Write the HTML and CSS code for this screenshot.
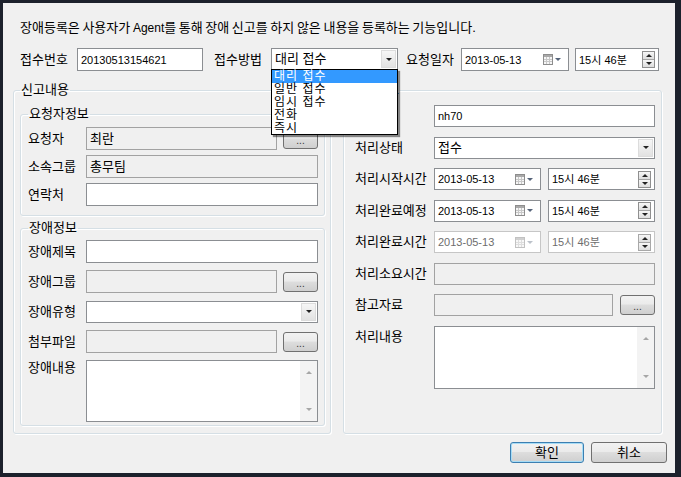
FILE: index.html
```html
<!DOCTYPE html>
<html lang="ko">
<head>
    <meta charset="UTF-8">
    <title>장애등록</title>
    <link rel="stylesheet" href="styles.css">
</head>
<body>

<div class="dialog">
    <p class="desc">장애등록은 사용자가 <span class="en">Agent</span>를 통해 장애 신고를 하지 않은 내용을 등록하는 기능입니다.</p>

    <div class="top-row">
        <span class="lbl lbl-top">접수번호</span>
        <div class="field w-no">20130513154621</div>
        <span class="lbl lbl-top gap-l">접수방법</span>
        <div class="field combo w-method"><span class="val ko">대리 접수</span><span class="combo-btn"><i class="tri"></i></span></div>
        <span class="lbl lbl-date">요청일자</span>
        <div class="field date w-date">
            <span class="val">2013-05-13</span>
            <span class="cal-btn">
                <svg width="10" height="11" viewBox="0 0 10 11"><rect x="0.5" y="0.5" width="9" height="10" fill="#f6f6f6" stroke="#8d8d8d"/><rect x="1" y="1" width="8" height="2" fill="#a9a9a9"/><path d="M1 5.5h8M1 7.5h8M3.5 3v7M6.5 3v7" stroke="#c8c8c8"/></svg>
                <i class="tri tri-blue"></i>
            </span>
        </div>
        <div class="field time w-time">
            <span class="val">15시 46분</span>
            <span class="spin"><span class="spin-btn"><i class="tri-up"></i></span><span class="spin-btn"><i class="tri"></i></span></span>
        </div>
    </div>

    <div class="main">
        <fieldset class="group group-left">
            <legend>신고내용</legend>

            <fieldset class="group sub sub-user">
                <legend>요청자정보</legend>
                <div class="row"><span class="lbl">요청자</span><div class="field off grow"><span class="ko">최란</span></div><button class="dots">...</button></div>
                <div class="row"><span class="lbl">소속그룹</span><div class="field off grow"><span class="ko">총무팀</span></div></div>
                <div class="row"><span class="lbl">연락처</span><div class="field grow"></div></div>
            </fieldset>

            <fieldset class="group sub sub-fault">
                <legend>장애정보</legend>
                <div class="row"><span class="lbl">장애제목</span><div class="field grow"></div></div>
                <div class="row"><span class="lbl">장애그룹</span><div class="field off grow"></div><button class="dots">...</button></div>
                <div class="row"><span class="lbl">장애유형</span><div class="field combo grow"><span class="val"></span><span class="combo-btn"><i class="tri"></i></span></div></div>
                <div class="row"><span class="lbl">첨부파일</span><div class="field off grow"></div><button class="dots">...</button></div>
                <div class="row row-area">
                    <span class="lbl">장애내용</span>
                    <div class="field memo grow"><span class="sb"><i class="tri-up gray"></i><i class="tri gray"></i></span></div>
                </div>
            </fieldset>
        </fieldset>

        <fieldset class="group group-right">
            <legend>처리정보</legend>
            <div class="rrow"><span class="lbl">처리자</span><div class="field grow">nh70</div></div>
            <div class="rrow"><span class="lbl">처리상태</span><div class="field combo grow"><span class="val ko">접수</span><span class="combo-btn"><i class="tri"></i></span></div></div>
            <div class="rrow">
                <span class="lbl">처리시작시간</span>
                <div class="field date grow">
                    <span class="val">2013-05-13</span>
                    <span class="cal-btn">
                        <svg width="10" height="11" viewBox="0 0 10 11"><rect x="0.5" y="0.5" width="9" height="10" fill="#f6f6f6" stroke="#8d8d8d"/><rect x="1" y="1" width="8" height="2" fill="#a9a9a9"/><path d="M1 5.5h8M1 7.5h8M3.5 3v7M6.5 3v7" stroke="#c8c8c8"/></svg>
                        <i class="tri tri-blue"></i>
                    </span>
                </div>
                <div class="field time grow">
                    <span class="val">15시 46분</span>
                    <span class="spin"><span class="spin-btn"><i class="tri-up"></i></span><span class="spin-btn"><i class="tri"></i></span></span>
                </div>
            </div>
            <div class="rrow">
                <span class="lbl">처리완료예정</span>
                <div class="field date grow">
                    <span class="val">2013-05-13</span>
                    <span class="cal-btn">
                        <svg width="10" height="11" viewBox="0 0 10 11"><rect x="0.5" y="0.5" width="9" height="10" fill="#f6f6f6" stroke="#8d8d8d"/><rect x="1" y="1" width="8" height="2" fill="#a9a9a9"/><path d="M1 5.5h8M1 7.5h8M3.5 3v7M6.5 3v7" stroke="#c8c8c8"/></svg>
                        <i class="tri tri-blue"></i>
                    </span>
                </div>
                <div class="field time grow">
                    <span class="val">15시 46분</span>
                    <span class="spin"><span class="spin-btn"><i class="tri-up"></i></span><span class="spin-btn"><i class="tri"></i></span></span>
                </div>
            </div>
            <div class="rrow">
                <span class="lbl">처리완료시간</span>
                <div class="field date disabled grow">
                    <span class="val">2013-05-13</span>
                    <span class="cal-btn">
                        <svg width="10" height="11" viewBox="0 0 10 11"><rect x="0.5" y="0.5" width="9" height="10" fill="#f8f8f8" stroke="#c2c2c2"/><rect x="1" y="1" width="8" height="2" fill="#d0d0d0"/><path d="M1 5.5h8M1 7.5h8M3.5 3v7M6.5 3v7" stroke="#dedede"/></svg>
                        <i class="tri tri-light"></i>
                    </span>
                </div>
                <div class="field time disabled grow">
                    <span class="val">15시 46분</span>
                    <span class="spin"><span class="spin-btn"><i class="tri-up"></i></span><span class="spin-btn"><i class="tri"></i></span></span>
                </div>
            </div>
            <div class="rrow"><span class="lbl">처리소요시간</span><div class="field off grow"></div></div>
            <div class="rrow"><span class="lbl">참고자료</span><div class="field off grow"></div><button class="dots">...</button></div>
            <div class="rrow row-area">
                <span class="lbl">처리내용</span>
                <div class="field memo memo-r grow"><span class="sb"><i class="tri-up gray"></i><i class="tri gray"></i></span></div>
            </div>
        </fieldset>
    </div>

    <div class="footer">
        <button class="btn btn-ok">확인</button>
        <button class="btn btn-cancel">취소</button>
    </div>

    <!-- 접수방법 콤보 펼침 목록 -->
    <ul class="dropdown">
        <li class="sel">대리 접수</li>
        <li>일반 접수</li>
        <li>임시 접수</li>
        <li>전화</li>
        <li>즉시</li>
    </ul>
</div>

</body>
</html>
```

FILE: styles.css
```css
* {
    box-sizing: border-box;
}
body {
    margin: 0;
    background-color: #1c212c;
    font-family: "Liberation Sans", "Noto Sans CJK KR", sans-serif;
    font-size: 13px;
    color: #000;
}
.dialog {
    position: relative;
    margin: 3px 0 0 3px;
    width: 672px;
    height: 470px;
    background-color: #f0f0f0;
    padding: 17px 8px 0 10px;
    display: flex;
    flex-direction: column;
}
.desc {
    margin: 0 0 0 7px;
    line-height: 16px;
    height: 16px;
    word-spacing: -1px;
}
.en {
    font-size: 12px;
}

/* 상단 줄 */
.top-row {
    margin: 12px 0 0 7px;
    height: 23px;
    display: flex;
    align-items: center;
}
.lbl {
    line-height: 14px;
    white-space: nowrap;
    flex-shrink: 0;
}
.lbl-top {
    width: 57px;
}
.lbl-date {
    width: 55px;
    margin-left: 8px;
}
.gap-l {
    margin-left: 11px;
}
.w-no { width: 126px; }
.w-method { width: 127px; height: 22px; align-self: flex-start; }
.w-date { width: 108px; height: 24px; }
.w-time { width: 84px; height: 24px; margin-left: 6px; }

/* 입력 컨트롤 */
.field {
    height: 23px;
    border: 1px solid #8b8e92;
    background-color: #fff;
    padding: 0 0 0 3px;
    display: flex;
    align-items: center;
    line-height: 14px;
    font-size: 11px;
    white-space: nowrap;
    min-width: 0;
}
.field .ko {
    font-size: 13px;
}
.field.off {
    background-color: #f0f0f0;
    border-color: #a2a2a2;
}
.field.disabled {
    border-color: #c6c6c6;
    color: #6d6d6d;
}
.grow {
    flex: 1;
}
.val {
    flex: 1;
    overflow: hidden;
}
.combo {
    height: 22px;
}
.combo-btn {
    width: 15px;
    height: 18px;
    margin-right: 1px;
    background: linear-gradient(#f6f6f6, #e2e2e2);
    border: 1px solid #dcdcdc;
    display: flex;
    align-items: center;
    justify-content: center;
}
.tri {
    display: block;
    width: 0;
    height: 0;
    border-left: 3px solid transparent;
    border-right: 3px solid transparent;
    border-top: 3px solid #222;
}
.tri-up {
    display: block;
    width: 0;
    height: 0;
    border-left: 3px solid transparent;
    border-right: 3px solid transparent;
    border-bottom: 3px solid #222;
}
.tri-blue {
    border-top-color: #56647a;
    margin-left: 2px;
}
.tri-light {
    border-top-color: #bcc2ca;
    margin-left: 2px;
}
.gray {
    border-top-color: #a6a6a6;
    border-bottom-color: #a6a6a6;
}
.cal-btn {
    display: flex;
    align-items: center;
    margin-right: 7px;
}
.cal-btn svg {
    display: block;
}
.spin {
    width: 13px;
    height: 17px;
    margin-right: 3px;
    display: flex;
    flex-direction: column;
    border: 1px solid #8f8f8f;
    background-color: #fff;
}
.spin-btn {
    flex: 1;
    display: flex;
    align-items: center;
    justify-content: center;
    background: linear-gradient(#f7f7f7, #dedede);
}
.spin-btn + .spin-btn {
    border-top: 1px solid #a5a5a5;
}
.disabled .spin {
    border-color: #a8a8a8;
}
.dots {
    width: 35px;
    height: 20px;
    margin-left: 6px;
    flex-shrink: 0;
    border: 1px solid #707070;
    border-radius: 3px;
    background: linear-gradient(#f2f2f2, #ebebeb 45%, #dddddd 50%, #cfcfcf);
    font-family: "Liberation Sans", sans-serif;
    font-size: 10px;
    color: #333;
    padding: 4px 0 0 0;
    line-height: 10px;
}

/* 그룹 박스 */
.main {
    margin-top: 12px;
    display: flex;
    gap: 12px;
}
.group {
    margin: 0;
    min-width: 0;
    border: 1px solid #d5dfe5;
    border-radius: 3px;
    box-shadow: inset 1px 1px 0 #fff, 1px 1px 0 #fff;
}
.group legend {
    padding: 0 1px;
    line-height: 14px;
}
.group-left {
    width: 318px;
    height: 351px;
    padding: 10px 5px 0 6px;
}
.group-right {
    width: 319px;
    height: 351px;
    padding: 8px 6px 0 11px;
}
.group-right legend {
    margin-left: -5px;
}
.sub {
    padding: 6px 6px 9px 7px;
}
.sub-fault {
    margin-top: 5px;
    padding-top: 5px;
    padding-bottom: 3px;
}
.row {
    display: flex;
    align-items: center;
    height: 23px;
}
.row .lbl {
    width: 58px;
}
.sub-user .row + .row {
    margin-top: 5px;
}
.sub-fault .row + .row {
    margin-top: 7px;
}
.rrow {
    display: flex;
    align-items: center;
    height: 22px;
    gap: 7px;
}
.rrow + .rrow {
    margin-top: 9.5px;
}
.rrow .lbl {
    width: 72px;
}
.rrow .field {
    height: 22px;
}
.rrow .dots {
    margin-left: 0;
}
.row-area {
    align-items: flex-start;
    height: auto;
}
.row-area .lbl {
    margin-top: 1px;
}
.rrow.row-area .lbl {
    margin-top: 4px;
}
.field.memo {
    height: 62px;
    align-items: stretch;
    padding: 0;
}
.field.memo-r {
    height: 63px;
}
.sb {
    margin-left: auto;
    width: 17px;
    background-color: #f3f3f3;
    display: flex;
    flex-direction: column;
    justify-content: space-between;
    align-items: center;
    padding: 10px 0;
}

/* 하단 버튼 */
.footer {
    margin-top: 8px;
    display: flex;
    justify-content: flex-end;
    gap: 7px;
}
.btn {
    height: 21px;
    border: 1px solid #707070;
    border-radius: 3px;
    background: linear-gradient(#f2f2f2, #ebebeb 45%, #dddddd 50%, #cfcfcf);
    font-family: "Liberation Sans", "Noto Sans CJK KR", sans-serif;
    font-size: 13px;
    line-height: 14px;
    padding: 0;
    color: #000;
}
.btn-ok {
    width: 74px;
    border-color: #3c7fb1;
    box-shadow: inset 0 0 0 1px #a6dcf6;
}
.btn-cancel {
    width: 76px;
}

/* 펼친 콤보 목록 */
.dropdown {
    position: absolute;
    left: 268px;
    top: 66px;
    width: 127px;
    height: 66px;
    margin: 0;
    padding: 0;
    list-style: none;
    background-color: #fff;
    border: 1px solid #000;
    box-shadow: 2px 2px 1px rgba(0, 0, 0, 0.45);
}
.dropdown li {
    height: 13px;
    line-height: 13px;
    padding-left: 2px;
    font-size: 12px;
    letter-spacing: 1px;
}
.dropdown li.sel {
    background-color: #3399ff;
    color: #fff;
}
```
